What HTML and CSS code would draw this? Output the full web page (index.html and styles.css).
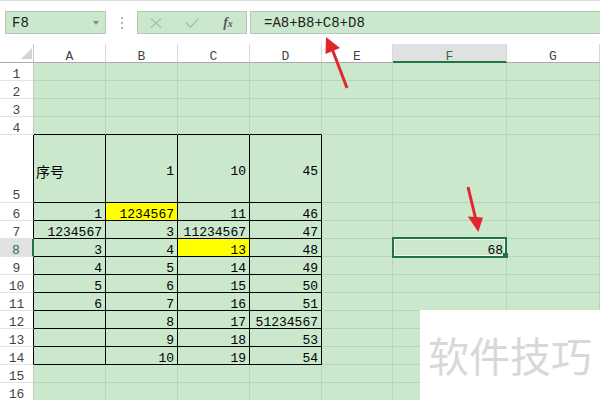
FILE: index.html
```html
<!DOCTYPE html>
<html lang="zh">
<head>
<meta charset="utf-8">
<title>Sheet</title>
<link rel="stylesheet" href="styles.css">
</head>
<body>
<div class="topbar">
  <div class="namebox"><span>F8</span><span class="caret"></span></div>
  <div class="dots"><i></i><i></i><i></i></div>
  <div class="btns">
    <span class="btn"><svg width="12" height="10" viewBox="0 0 12 10"><path d="M1 0.5 L11 9.5 M11 0.5 L1 9.5" stroke="#a9bfaa" stroke-width="1.2" fill="none"/></svg></span>
    <span class="btn"><svg width="14" height="10" viewBox="0 0 14 10"><path d="M0.5 4 L5.5 9.3 L13.5 0.5" stroke="#a9bfaa" stroke-width="1.4" fill="none"/></svg></span>
    <span class="btn fx">f<small>x</small></span>
  </div>
  <div class="fbox">=A8+B8+C8+D8</div>
</div>
<div class="sheet">
  <div class="corner"><svg width="11" height="11" viewBox="0 0 11 11"><polygon points="11,0 11,11 0,11" fill="#d4d4d4"/></svg></div>
  <div class="ch">A</div><div class="ch">B</div><div class="ch">C</div><div class="ch">D</div><div class="ch">E</div><div class="ch sel">F</div><div class="ch">G</div>

  <div class="rh">1</div><div></div><div></div><div></div><div></div><div></div><div></div><div></div>
  <div class="rh">2</div><div></div><div></div><div></div><div></div><div></div><div></div><div></div>
  <div class="rh">3</div><div></div><div></div><div></div><div></div><div></div><div></div><div></div>
  <div class="rh">4</div><div class="kb"></div><div class="kb"></div><div class="kb"></div><div class="kb"></div><div></div><div></div><div></div>

  <div class="rh kr r5h">5</div><div class="k r5 left"><span class="cn">序号</span></div><div class="k r5">1</div><div class="k r5">10</div><div class="k r5">45</div><div></div><div></div><div></div>

  <div class="rh kr">6</div><div class="k">1</div><div class="k y">1234567</div><div class="k">11</div><div class="k">46</div><div></div><div></div><div></div>
  <div class="rh kr">7</div><div class="k">1234567</div><div class="k">3</div><div class="k">11234567</div><div class="k">47</div><div></div><div></div><div></div>
  <div class="rh cur">8</div><div class="k">3</div><div class="k">4</div><div class="k y">13</div><div class="k">48</div><div></div><div class="active">68<span class="handle"></span></div><div></div>
  <div class="rh kr">9</div><div class="k">4</div><div class="k">5</div><div class="k">14</div><div class="k">49</div><div></div><div></div><div></div>
  <div class="rh kr">10</div><div class="k">5</div><div class="k">6</div><div class="k">15</div><div class="k">50</div><div></div><div></div><div></div>
  <div class="rh kr">11</div><div class="k">6</div><div class="k">7</div><div class="k">16</div><div class="k">51</div><div></div><div></div><div></div>
  <div class="rh kr">12</div><div class="k"></div><div class="k">8</div><div class="k">17</div><div class="k">51234567</div><div></div><div></div><div></div>
  <div class="rh kr">13</div><div class="k"></div><div class="k">9</div><div class="k">18</div><div class="k">53</div><div></div><div></div><div></div>
  <div class="rh kr">14</div><div class="k"></div><div class="k">10</div><div class="k">19</div><div class="k">54</div><div></div><div></div><div></div>
  <div class="rh">15</div><div></div><div></div><div></div><div></div><div></div><div></div><div></div>
  <div class="rh">16</div><div></div><div></div><div></div><div></div><div></div><div></div><div></div>
</div>

<div class="watermark">软件技巧</div>

<svg class="arrows" width="600" height="400" viewBox="0 0 600 400">
  <line x1="347" y1="88" x2="332.5" y2="50" stroke="#e3262d" stroke-width="3"/>
  <polygon points="326,37 325.5,54 340,48" fill="#e3262d"/>
  <line x1="468" y1="187" x2="475.5" y2="218" stroke="#e3262d" stroke-width="3"/>
  <polygon points="467.8,216.5 483,217.5 478.3,232" fill="#e3262d"/>
</svg>
</body>
</html>
```

FILE: styles.css
```css
html, body {
  margin: 0;
  padding: 0;
}

body {
  width: 600px;
  height: 400px;
  position: relative;
  overflow: hidden;
  background: #ffffff;
  font-family: "Liberation Mono", "Noto Sans CJK SC", monospace;
  font-size: 13px;
  color: #000;
}

/* ---------- formula bar ---------- */
.topbar {
  height: 44px;
  box-sizing: border-box;
  border-top: 1px solid #dcdcdc;
  display: flex;
  align-items: flex-start;
  padding: 10px 0 0 5px;
}

.namebox {
  width: 101px;
  height: 23px;
  box-sizing: border-box;
  background: #cbe8cd;
  border: 1px solid #b3c9b4;
  display: flex;
  align-items: center;
  justify-content: space-between;
  padding: 0 6px;
  font-size: 14px;
  color: #222;
}

.caret {
  width: 0;
  height: 0;
  border-left: 3.5px solid transparent;
  border-right: 3.5px solid transparent;
  border-top: 4px solid #8a8a8a;
}

.dots {
  width: 31px;
  display: flex;
  flex-direction: column;
  align-items: center;
  gap: 3px;
  padding-top: 6px;
}

.dots i {
  width: 2px;
  height: 2px;
  background: #b4b4b4;
}

.btns {
  width: 110px;
  height: 23px;
  box-sizing: border-box;
  background: #cbe8cd;
  border: 1px solid #b3c9b4;
  display: flex;
  align-items: center;
}

.btn {
  width: 36px;
  display: flex;
  justify-content: center;
  align-items: center;
}

.fx {
  font-family: "Liberation Serif", serif;
  font-style: italic;
  font-weight: bold;
  font-size: 14px;
  color: #5a5a5a;
  line-height: 1;
}

.fx small {
  font-size: 10px;
  position: relative;
  top: 1px;
}

.fbox {
  margin-left: 3px;
  flex: 1;
  height: 23px;
  box-sizing: border-box;
  background: #cbe8cd;
  border: 1px solid #b3c9b4;
  border-right: none;
  padding-left: 13px;
  display: flex;
  align-items: center;
  font-size: 14px;
  color: #222;
}

/* ---------- sheet ---------- */
.sheet {
  display: grid;
  grid-template-columns: 34px 72px 72px 72px 72px 71px 114px 93px;
  grid-template-rows: 19px repeat(4, 18px) 68px repeat(11, 18px);
}

.sheet > div {
  box-sizing: border-box;
  border-right: 1px solid #b8d4ba;
  border-bottom: 1px solid #b8d4ba;
  background: #cbe8cd;
  padding: 5px 3px 0 0;
  line-height: 13px;
  text-align: right;
  white-space: nowrap;
}

.sheet > .corner {
  background: #fff;
  border-right-color: #c6c6c6;
  border-bottom-color: #ababab;
  display: flex;
  align-items: flex-end;
  justify-content: flex-end;
  padding: 0 1px 3px 0;
}

.sheet > .ch {
  background: #fff;
  border-right-color: #d8d8d8;
  border-bottom-color: #ababab;
  text-align: center;
  color: #444;
  padding: 6px 0 0;
}

.sheet > .ch.sel {
  background: #e1e1e1;
  color: #217346;
  border-bottom: 2px solid #217346;
}

.sheet > .rh {
  background: #fff;
  border-right-color: #c6c6c6;
  border-bottom-color: #e2e2e2;
  text-align: center;
  color: #444;
  padding: 5px 0 0;
}

.sheet > .rh.kr {
  border-right-color: #000;
}

.sheet > .rh.r5h {
  padding-top: 54px;
}

.sheet > .rh.cur {
  background: #e1e1e1;
  color: #217346;
  border-right: 2px solid #217346;
}

.sheet > .k {
  border-right-color: #000;
  border-bottom-color: #000;
}

.sheet > .kb {
  border-bottom-color: #000;
}

.sheet > .r5 {
  padding-top: 30px;
}

.sheet > .left {
  text-align: left;
  padding-left: 2px;
}

.cn {
  font-family: "Noto Sans CJK SC", sans-serif;
  font-size: 14px;
}

.sheet > .y {
  background: #ffff00;
}

.sheet > .active {
  position: relative;
}

.active::after {
  content: "";
  position: absolute;
  left: -1px;
  top: -2px;
  width: 115px;
  height: 21px;
  box-sizing: border-box;
  border: 2px solid #217346;
  box-shadow: inset 0 0 0 1px #f4fbf4;
  z-index: 1;
}

.handle {
  position: absolute;
  left: 110px;
  top: 14px;
  width: 5px;
  height: 5px;
  background: #217346;
  z-index: 2;
}

/* ---------- overlays ---------- */
.watermark {
  position: absolute;
  left: 420px;
  top: 310px;
  width: 180px;
  height: 90px;
  box-sizing: border-box;
  background: #fff;
  padding: 24px 0 0 8px;
  font-family: "Noto Sans CJK SC", sans-serif;
  font-size: 41px;
  line-height: 41px;
  color: #d8d8d8;
  white-space: nowrap;
}

.arrows {
  position: absolute;
  left: 0;
  top: 0;
  pointer-events: none;
}
```
